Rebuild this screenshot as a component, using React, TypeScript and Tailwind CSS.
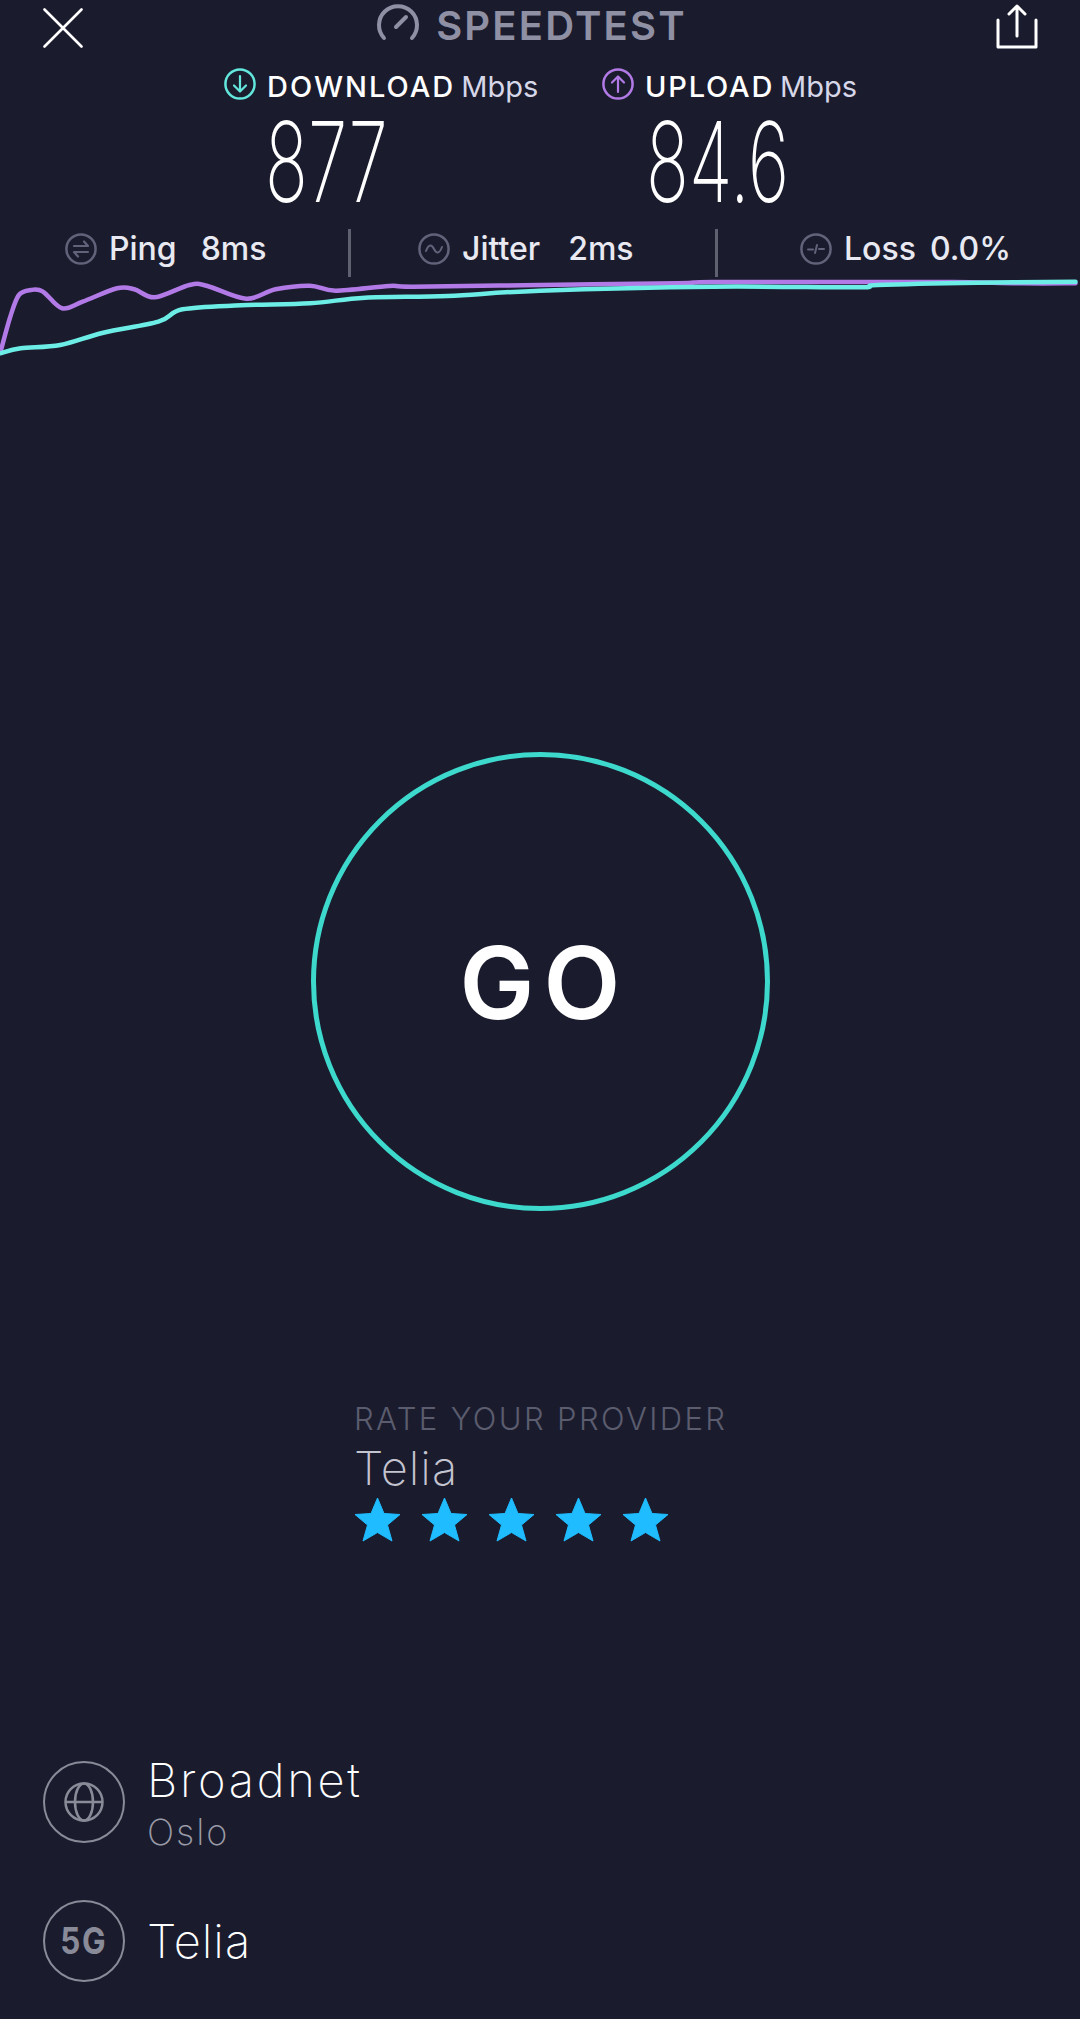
const smooth = (pts: number[][]) => {
  let d = `M${pts[0][0]} ${pts[0][1]}`;
  for (let i = 0; i < pts.length - 1; i++) {
    const p0 = pts[Math.max(i - 1, 0)], p1 = pts[i], p2 = pts[i + 1], p3 = pts[Math.min(i + 2, pts.length - 1)];
    d += ` C${(p1[0] + (p2[0] - p0[0]) / 6).toFixed(1)} ${(p1[1] + (p2[1] - p0[1]) / 6).toFixed(1)} ${(p2[0] - (p3[0] - p1[0]) / 6).toFixed(1)} ${(p2[1] - (p3[1] - p1[1]) / 6).toFixed(1)} ${p2[0].toFixed(1)} ${p2[1].toFixed(1)}`;
  }
  return d;
};
const L = (a: number[][]) => a.map(([x, y]) => [x / 2.904, y / 3 - 57]);
const R = (a: number[][]) => a.map(([x, y]) => [540 + x / 2.904, y / 3 - 57]);
const purple = [
  ...L([[3, 390], [30, 290], [55, 225], [90, 210], [125, 215], [180, 265], [240, 245], [340, 205], [390, 208], [450, 232], [550, 195], [600, 197], [715, 236], [800, 208], [900, 197], [975, 212], [1130, 198], [1200, 200], [1568, 195]]),
  ...R([[400, 190], [500, 186], [950, 186], [1200, 186], [1400, 190], [1555, 190]]),
];
const teal = [
  ...L([[0, 400], [60, 385], [175, 375], [300, 338], [460, 305], [530, 268], [700, 256], [900, 250], [1060, 233], [1300, 228], [1568, 212]]),
  ...R([[500, 200], [920, 202], [980, 195], [1270, 188], [1555, 185]]),
];

function Circle({ color, children }: { color: string; children?: React.ReactNode }) {
  return (
    <svg width="32" height="32" viewBox="0 0 32 32" fill="none" stroke={color} strokeWidth="2.5" strokeLinecap="round" strokeLinejoin="round" className="shrink-0">
      <circle cx="16" cy="16" r="14.6" />
      {children}
    </svg>
  );
}

function Star() {
  return (
    <svg width="47" height="45" viewBox="0 0 47 45" className="shrink-0">
      <path d="M23.5 1 L30 16.5 L46 17.5 L33.5 28 L38 44 L23.5 35.5 L9 44 L13.5 28 L1 17.5 L17 16.5 Z" fill="#1fbcff" stroke="#1fbcff" strokeWidth="1" strokeLinejoin="round" />
    </svg>
  );
}

function Stat({ icon, label, value, gap }: { icon: React.ReactNode; label: string; value: string; gap: string }) {
  return (
    <div className="flex items-center pb-[8px]">
      {icon}
      <span className={`ml-3 text-[32px] leading-[40px] font-medium text-[#e9e9f2] ${gap}`}>{label}</span>
      <span className="text-[32px] leading-[40px] font-medium text-[#e9e9f2]">{value}</span>
    </div>
  );
}

export default function App() {
  const gray = "#62637a";
  return (
    <div className="w-[1080px] h-[2019px] overflow-hidden bg-[#1a1c2e] text-white font-['Inter','Liberation_Sans',sans-serif]">
      <header className="flex items-start justify-between h-[60px] pl-[43px] pr-[42px] pt-[6px]">
        <svg width="40" height="40" viewBox="0 0 40 40" stroke="#fff" strokeWidth="2.6" strokeLinecap="round" className="mt-[2px]">
          <path d="M1.5 1.5 L38.5 38.5 M38.5 1.5 L1.5 38.5" />
        </svg>
        <div className="flex items-start gap-[16px] mr-[16px] -mt-[4px]">
          <svg width="44" height="40" viewBox="0 0 44 40" fill="none" stroke="#8f90a4" strokeWidth="4" strokeLinecap="round">
            <path d="M8 36 A19 19 0 1 1 36 36" />
            <path d="M20 25 L30 15" strokeWidth="4" />
          </svg>
          <span className="text-[40px] leading-[48px] font-semibold tracking-[2.2px] text-[#8f90a4]">SPEEDTEST</span>
        </div>
        <svg width="42" height="46" viewBox="0 0 42 46" fill="none" stroke="#fff" strokeWidth="3" strokeLinecap="round" strokeLinejoin="round" className="-mt-[3px]">
          <path d="M2 17 V44 H40 V17" />
          <path d="M21 33 V3 M13 11 L21 3 L29 11" />
        </svg>
      </header>

      <div className="flex h-[40px] mt-[7px]">
        <div className="flex items-center ml-[224px] w-[378px]">
          <div className="-mt-[6px]">
            <Circle color="#63e6dc">
              <path d="M16 8 V23 M10 17.5 L16 23.5 L22 17.5" strokeWidth="2.2" />
            </Circle>
          </div>
          <span className="ml-[11px] text-[29px] leading-[36px] font-medium tracking-[2px]">DOWNLOAD</span>
          <span className="ml-[6px] text-[29px] leading-[36px] text-[#d6d7e8]">Mbps</span>
        </div>
        <div className="flex items-center">
          <div className="-mt-[6px]">
            <Circle color="#b27ae6">
              <path d="M16 24 V9 M10 14.5 L16 8.5 L22 14.5" strokeWidth="2.2" />
            </Circle>
          </div>
          <span className="ml-[11px] text-[29px] leading-[36px] font-medium tracking-[1.8px]">UPLOAD</span>
          <span className="ml-[6px] text-[29px] leading-[36px] text-[#d6d7e8]">Mbps</span>
        </div>
      </div>

      <div className="flex h-[100px] mt-[5px]">
        <div className="ml-[265px] w-[381px]">
          <span className="block origin-left scale-x-[0.64] text-[111px] leading-[100px] font-extralight">877</span>
        </div>
        <span className="block origin-left scale-x-[0.64] text-[111px] leading-[100px] font-extralight">84.6</span>
      </div>

      <div className="flex items-center h-[48px] mt-[17px]">
        <div className="ml-[65px] w-[283px]">
          <Stat gap="mr-[24px]" label="Ping" value="8ms" icon={
            <Circle color={gray}><path d="M9 13 H23 L19 8.5 M23 19 H9 L13 23.5" strokeWidth="2.2" /></Circle>
          } />
        </div>
        <div className="w-[3px] h-[48px] bg-[#5f6070]" />
        <div className="ml-[67px] w-[297px]">
          <Stat gap="mr-[28px]" label="Jitter" value="2ms" icon={
            <Circle color={gray}><path d="M8 18 C11 10 14 12 16 16 C18 20 21 22 24 14" strokeWidth="2" /></Circle>
          } />
        </div>
        <div className="w-[3px] h-[48px] bg-[#5f6070]" />
        <div className="ml-[82px]">
          <Stat gap="mr-[14px]" label="Loss" value="0.0%" icon={
            <Circle color={gray}><path d="M8 16.5 H13 M15 20 L17 12 M19 16 H24" strokeWidth="2" /></Circle>
          } />
        </div>
      </div>

      <svg width="1080" height="100" viewBox="0 0 1080 100" fill="none" strokeWidth="4.5" strokeLinecap="round" strokeLinejoin="round" className="block">
        <path d={smooth(purple)} stroke="#b27ae6" />
        <path d={smooth(teal)} stroke="#6ceee6" />
      </svg>

      <div className="flex justify-center mt-[375px]">
        <div className="flex items-center justify-center w-[459px] h-[459px] rounded-full border-[5px] border-[#3dd9cd]">
          <span className="pt-[2px] text-[100px] leading-none font-semibold tracking-[9px] ml-[9px] text-white">GO</span>
        </div>
      </div>

      <div className="ml-[354px] mt-[190px]">
        <div className="text-[31px] leading-[36px] font-light tracking-[2.4px] text-[#5b5c6e]">RATE YOUR PROVIDER</div>
        <div className="mt-[6px] text-[47px] leading-[50px] font-extralight tracking-[1px] text-[#c4c4d0]">Telia</div>
        <div className="flex gap-[20px] mt-[4px]">
          <Star /><Star /><Star /><Star /><Star />
        </div>
      </div>

      <div className="ml-[43px] mt-[219px] flex items-center gap-[22px] h-[82px]">
        <div className="flex items-center justify-center w-[82px] h-[82px] rounded-full border-2 border-[#8a8b99]">
          <svg width="40" height="40" viewBox="0 0 40 40" fill="none" stroke="#8a8b99" strokeWidth="2.5">
            <circle cx="20" cy="20" r="18.5" />
            <ellipse cx="20" cy="20" rx="9" ry="18.5" />
            <path d="M1.5 20 H38.5" />
          </svg>
        </div>
        <div>
          <div className="text-[47px] leading-[50px] font-extralight tracking-[2.7px]">Broadnet</div>
          <div className="mt-[7px] -mb-[3px] text-[36px] leading-[40px] font-extralight tracking-[2px] text-[#9a9ba6]">Oslo</div>
        </div>
      </div>
      <div className="ml-[43px] mt-[57px] flex items-center gap-[22px] h-[82px]">
        <div className="flex items-center justify-center w-[82px] h-[82px] rounded-full border-2 border-[#8a8b99]">
          <span className="text-[37px] font-bold tracking-[2px] text-[#8a8b99] scale-x-[0.85]">5G</span>
        </div>
        <div className="text-[47px] leading-[50px] font-extralight tracking-[1px]">Telia</div>
      </div>
    </div>
  );
}
